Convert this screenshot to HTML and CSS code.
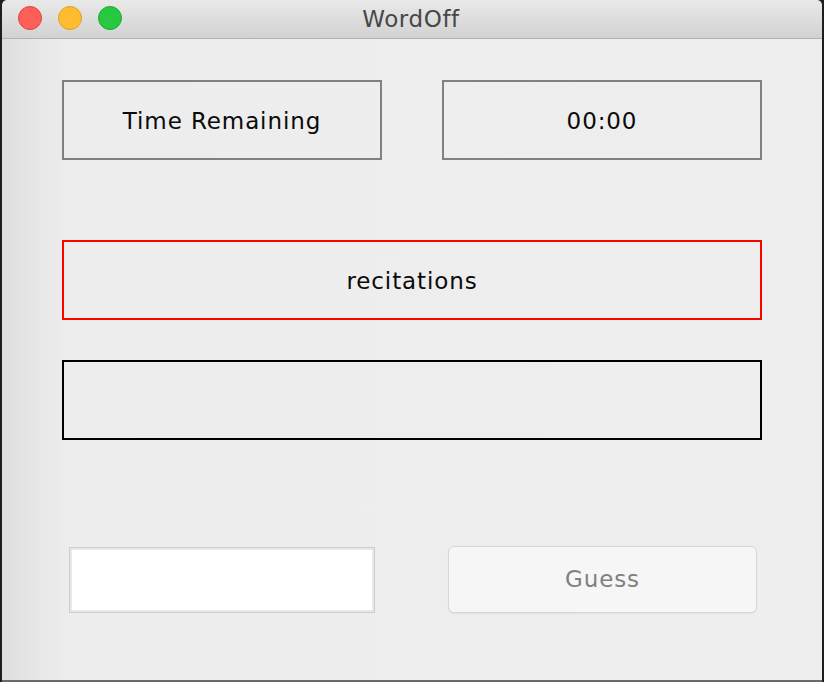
FILE: index.html
```html
<!DOCTYPE html>
<html>
<head>
<meta charset="utf-8">
<title>WordOff</title>
<link rel="stylesheet" href="styles.css">
</head>
<body>
<div class="window">
  <div class="titlebar">
    <div class="lights">
      <span class="light red"></span>
      <span class="light yellow"></span>
      <span class="light green"></span>
    </div>
    <div class="title">WordOff</div>
  </div>
  <div class="content">
    <div class="row">
      <div class="box gray">Time Remaining</div>
      <div class="box gray">00:00</div>
    </div>
    <div class="box wide red-border">recitations</div>
    <div class="box wide black-border"></div>
    <div class="bottom">
      <input class="field" type="text">
      <button class="guess">Guess</button>
    </div>
  </div>
</div>
</body>
</html>
```
FILE: styles.css
```css
html, body {
  margin: 0;
  padding: 0;
}
body {
  width: 824px;
  height: 682px;
  background: #1e1e1e;
  overflow: hidden;
  font-family: "DejaVu Sans", "Liberation Sans", sans-serif;
}
.window {
  margin-left: 2px;
  width: 820px;
  height: 680px;
  border-radius: 5px 5px 0 0;
  overflow: hidden;
  display: flex;
  flex-direction: column;
  border-bottom: 2px solid #6a6a6a;
}
.titlebar {
  height: 38px;
  flex: none;
  position: relative;
  background: linear-gradient(#e9e9e9, #d2d2d2);
  border-bottom: 1px solid #b3b3b3;
  display: flex;
  align-items: center;
  justify-content: center;
}
.lights {
  position: absolute;
  left: 16px;
  top: 6px;
  display: flex;
  gap: 16px;
}
.light {
  width: 24px;
  height: 24px;
  border-radius: 50%;
  box-sizing: border-box;
}
.red { background: #fe5f57; border: 1px solid #e0443e; }
.yellow { background: #febc2e; border: 1px solid #dea123; }
.green { background: #28c840; border: 1px solid #1aab29; }
.title {
  font-size: 23px;
  color: #474747;
  letter-spacing: 0.6px;
  margin-left: -2px;
}
.content {
  flex: 1;
  background: linear-gradient(to right, #dedede 0, #e8e8e8 40px, #ededed 70px, #eeeeee 100%);
  padding: 41px 0 0 60px;
  display: flex;
  flex-direction: column;
}
.row {
  display: flex;
  gap: 60px;
}
.box {
  box-sizing: border-box;
  height: 80px;
  width: 320px;
  display: flex;
  align-items: center;
  justify-content: center;
  font-size: 23px;
  letter-spacing: 0.9px;
  color: #0a0a0a;
  padding-top: 2px;
}
.gray { border: 2px solid #808080; }
.wide { width: 700px; }
.red-border { border: 2px solid #ff0000; margin-top: 80px; }
.black-border { border: 2px solid #000; margin-top: 40px; }
.bottom {
  display: flex;
  align-items: center;
  margin-top: 105px;
  margin-left: 7px;
  gap: 73px;
}
.field {
  box-sizing: border-box;
  width: 306px;
  height: 66px;
  margin: 2px 0 0 0;
  border: 1px solid #cccccc;
  box-shadow: inset 0 0 0 2px #e9e9e9;
  background: #fff;
  outline: none;
  padding: 0;
}
.guess {
  box-sizing: border-box;
  width: 309px;
  height: 67px;
  margin: 0;
  border: 1px solid #d6d6d6;
  border-radius: 6px;
  background: #f6f6f6;
  color: #808080;
  font-family: "DejaVu Sans", "Liberation Sans", sans-serif;
  font-size: 23px;
  letter-spacing: 0.9px;
  box-shadow: 0 1px 1px rgba(0,0,0,0.05);
}
```
